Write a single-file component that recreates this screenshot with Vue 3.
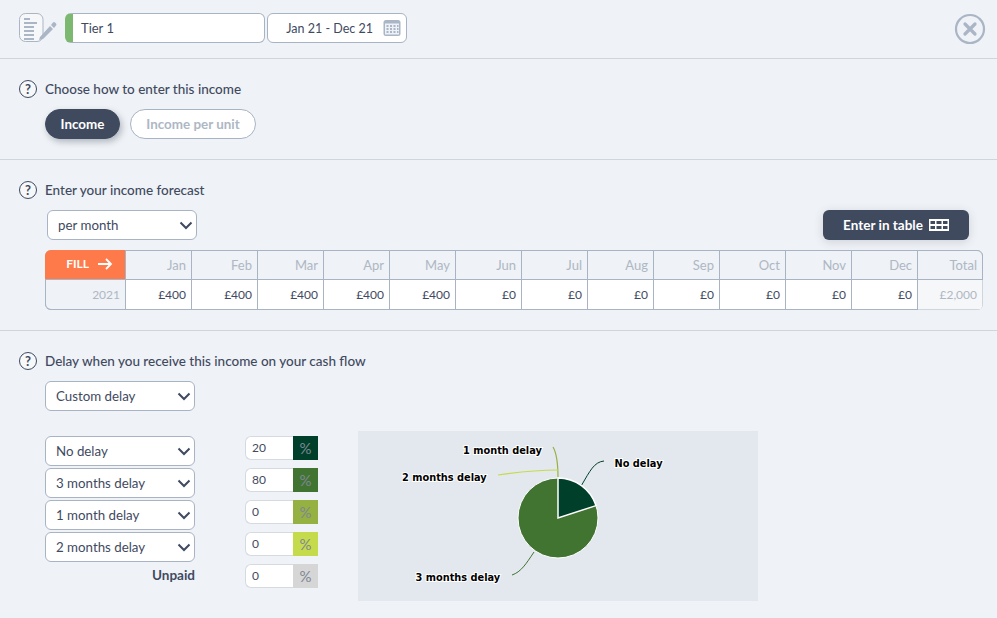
<script setup>
const months = ['Jan','Feb','Mar','Apr','May','Jun','Jul','Aug','Sep','Oct','Nov','Dec']
const values = ['£400','£400','£400','£400','£400','£0','£0','£0','£0','£0','£0','£0']
const delays = ['No delay','3 months delay','1 month delay','2 months delay']
const shares = [
  { v: '20', c: '#00402a' },
  { v: '80', c: '#417331' },
  { v: '0', c: '#95b141' },
  { v: '0', c: '#c6db4b' },
  { v: '0', c: '#d6d6d6' },
]
</script>

<template>
  <div class="page">
    <header class="top">
      <svg class="note" width="40" height="32" viewBox="0 0 40 32">
        <rect x="0.5" y="1.5" width="23.500" height="28" rx="6" fill="#f5f7f9" stroke="#aab5c5"/>
        <path d="M5 7h6M5 11h13M5 15h10M5 19h10M5 23h10M5 27h10" stroke="#aab5c5" stroke-width="1.800" fill="none"/>
        <path d="M21 25l10-11 3 3-10 10-4 1z M32 13l2-2.500a1.500 1.500 0 0 1 2 0l1 1a1.500 1.500 0 0 1 0 2l-2 2.500z" fill="#aab5c5"/>
      </svg>
      <div class="tier"><span>Tier 1</span></div>
      <div class="dates">
        <span>Jan 21 - Dec 21</span>
        <svg width="18" height="18" viewBox="0 0 18 18">
          <rect x="0.500" y="1" width="17" height="16" rx="2.500" fill="#aab5c5"/>
          <rect x="2" y="4.500" width="14" height="11" fill="#eef1f5"/>
          <path d="M3.500 6h2v2h-2zM7 6h2v2H7zM10.500 6h2v2h-2zM14 6h1.500v2H14zM3.500 9h2v2h-2zM7 9h2v2H7zM10.500 9h2v2h-2zM14 9h1.500v2H14zM3.500 12h2v2h-2zM7 12h2v2H7zM10.500 12h2v2h-2zM14 12h1.500v2H14z" fill="#aab5c5"/>
        </svg>
      </div>
      <svg class="close" width="32" height="32" viewBox="0 0 32 32">
        <circle cx="16" cy="16" r="14" fill="none" stroke="#aab5c5" stroke-width="2.200"/>
        <path d="M11 11l10 10M21 11L11 21" stroke="#aab5c5" stroke-width="3.200" stroke-linecap="round"/>
      </svg>
    </header>

    <section class="sec first">
      <h2><span class="q">?</span>Choose how to enter this income</h2>
      <div class="pills">
        <button class="pill on">Income</button>
        <button class="pill">Income per unit</button>
      </div>
    </section>

    <section class="sec second">
      <h2><span class="q">?</span>Enter your income forecast</h2>
      <div class="controls">
        <div class="sel wide">
          <select><option>per month</option></select>
          <svg class="chev" width="14" height="9" viewBox="0 0 14 9"><path d="M1.500 1.500L7 7l5.500-5.500" fill="none" stroke="#3f4a5f" stroke-width="2"/></svg>
        </div>
        <button class="tbl-btn">Enter in table
          <svg width="20" height="12" viewBox="0 0 20 12"><path fill-rule="evenodd" d="M0 0h20v12H0zM1.500 2v3H6V2zM7.500 2v3h5V2zM14 2v3h4.500V2zM1.500 7v3H6V7zM7.500 7v3h5V7zM14 7v3h4.500V7z" fill="#fff"/></svg>
        </button>
      </div>
      <div class="grid">
        <div class="fill">FILL
          <svg width="16" height="12" viewBox="0 0 16 12"><path d="M1 6h13M9 1l5 5-5 5" fill="none" stroke="#fff" stroke-width="1.800"/></svg>
        </div>
        <div v-for="m in months" :key="m" class="head">{{ m }}</div>
        <div class="head total-h">Total</div>
        <div class="year">2021</div>
        <div v-for="(v, i) in values" :key="i" class="val">{{ v }}</div>
        <div class="total">£2,000</div>
      </div>
    </section>

    <section class="sec third">
      <h2><span class="q">?</span>Delay when you receive this income on your cash flow</h2>
      <div class="sel custom">
        <select><option>Custom delay</option></select>
        <svg class="chev" width="14" height="9" viewBox="0 0 14 9"><path d="M1.500 1.500L7 7l5.500-5.500" fill="none" stroke="#3f4a5f" stroke-width="2"/></svg>
      </div>
      <div class="split">
        <div class="names">
          <div v-for="d in delays" :key="d" class="sel row">
            <select><option>{{ d }}</option></select>
            <svg class="chev" width="14" height="9" viewBox="0 0 14 9"><path d="M1.500 1.500L7 7l5.500-5.500" fill="none" stroke="#3f4a5f" stroke-width="2"/></svg>
          </div>
          <div class="unpaid">Unpaid</div>
        </div>
        <div class="shares">
          <div v-for="(s, i) in shares" :key="i" class="share">
            <input :value="s.v" />
            <span class="pct" :style="{ background: s.c }">%</span>
          </div>
        </div>
        <svg class="chart" width="400" height="170" viewBox="0 0 400 170">
          <rect width="400" height="170" fill="#e2e8ee"/>
          <path d="M223.700 54C232 40 236 31 246 30" fill="none" stroke="#00402a"/>
          <path d="M176 121C168 133 163 141 154 144" fill="none" stroke="#417331"/>
          <path d="M200 47C200 30 198 21 195 16" fill="none" stroke="#95b141" stroke-width="1.200"/>
          <path d="M200 39C175 39 160 41 140 44" fill="none" stroke="#c6db4b" stroke-width="1.200"/>
          <circle cx="200" cy="87" r="40" fill="#417331" stroke="#fff"/>
          <path d="M200 87V47A40 40 0 0 1 238 74.600Z" fill="#00402a" stroke="#fff" stroke-width="1.500"/>
          <text x="105" y="23">1 month delay</text>
          <text x="44" y="50">2 months delay</text>
          <text x="256.500" y="36">No delay</text>
          <text x="57.500" y="150">3 months delay</text>
        </svg>
      </div>
    </section>
  </div>
</template>

<style>
html, body { margin: 0; background: #eff2f6; }
</style>

<style scoped>
.page {
  width: 997px;
  height: 618px;
  overflow: hidden;
  background: #eff2f6;
  color: #3f4a5f;
  font-family: Lato, sans-serif;
  font-size: 13px;
}
.top {
  height: 58px;
  box-sizing: content-box;
  border-bottom: 1px solid #cfd5dc;
  display: flex;
  align-items: center;
  padding-left: 19px;
  padding-right: 11px;
}
.note { margin-right: 7px; margin-top: -2px; }
.tier {
  width: 200px;
  height: 30px;
  box-sizing: border-box;
  background: #fff;
  border: 1px solid #a8b3c4;
  border-left: 8px solid #7cb86f;
  border-radius: 6px;
  display: flex;
  align-items: center;
  padding-left: 8px;
  margin-top: -2px;
  margin-left: -1px;
}
.dates {
  width: 140px;
  height: 30px;
  box-sizing: border-box;
  background: #fff;
  border: 1px solid #a8b3c4;
  border-radius: 6px;
  margin-left: 2px;
  margin-top: -2px;
  display: flex;
  align-items: center;
  justify-content: flex-end;
  gap: 10px;
  padding-right: 5px;
  font-size: 12.500px;
}
.close { margin-left: auto; }
.sec { border-bottom: 1px solid #cfd5dc; box-sizing: content-box; padding-left: 19px; }
.first { height: 100px; padding-top: 0; }
.second { height: 170px; }
.third { height: 287px; border-bottom: none; }
h2 {
  margin: 0;
  font-size: 13.500px;
  font-weight: 500;
  display: flex;
  align-items: center;
  height: 20px;
  gap: 8px;
}
.first h2 { padding-top: 20px; }
.second h2 { padding-top: 20px; }
.third h2 { padding-top: 20px; }
.q {
  width: 18px;
  height: 18px;
  box-sizing: border-box;
  border: 1px solid #3f4a5f;
  border-radius: 50%;
  background: #f6f8fa;
  font-size: 13px;
  font-weight: 700;
  display: flex;
  align-items: center;
  justify-content: center;
}
.pills { display: flex; gap: 10px; margin: 10px 0 0 26px; }
.pill {
  height: 30px;
  box-sizing: border-box;
  border-radius: 15px;
  border: 1px solid #a8b3c4;
  background: #fff;
  color: #aeb7c4;
  font: 700 13.400px Lato, sans-serif;
  width: 126px;
  padding: 0;
}
.pill.on {
  width: 75px;
  background: #3f4a5f;
  border-color: #3f4a5f;
  color: #fff;
  box-shadow: 2px 3px 6px rgba(63, 74, 95, .35);
}
.sel { position: relative; }
.sel select {
  appearance: none;
  width: 100%;
  height: 100%;
  box-sizing: border-box;
  background: #fff;
  border: 1px solid #a8b3c4;
  border-radius: 6px;
  font: 13.300px Lato, sans-serif;
  color: #3f4a5f;
  padding: 0 10px;
  margin: 0;
}
.chev { position: absolute; right: 4px; top: 11px; }
.controls {
  display: flex;
  justify-content: space-between;
  align-items: center;
  margin: 10px 28px 0 28px;
  height: 30px;
}
.wide { width: 150px; height: 30px; }
.tbl-btn {
  width: 146px;
  height: 30px;
  border: none;
  border-radius: 6px;
  background: #3f4a5f;
  color: #fff;
  font: 700 13.500px Lato, sans-serif;
  display: flex;
  align-items: center;
  justify-content: center;
  gap: 6px;
  padding: 0;
  box-shadow: 0 2px 10px rgba(63, 74, 95, .18);
}
.grid {
  display: grid;
  grid-template-columns: 81px repeat(12, 66px) 65px;
  grid-template-rows: 30px 30px;
  width: 938px;
  margin: 10px 0 0 26px;
  box-sizing: border-box;
  border-radius: 6px;
  overflow: hidden;
  box-shadow: inset 0 0 0 1px #a8b3c4;
}
.fill {
  background: #ff7a4a;
  color: #fff;
  font-size: 12px;
  font-weight: 700;
  display: flex;
  align-items: center;
  justify-content: flex-end;
  gap: 8px;
  padding-right: 12px;
  padding-bottom: 2px;
  border-right: 1px solid #a8b3c4;
  border-bottom: 1px solid #a8b3c4;
  box-sizing: border-box;
}
.head, .val, .year, .total {
  box-sizing: border-box;
  display: flex;
  align-items: center;
  justify-content: flex-end;
  padding-right: 5px;
  border-right: 1px solid #a8b3c4;
}
.head { color: #aeb7c4; border-top: 1px solid #a8b3c4; border-bottom: 1px solid #a8b3c4; }
.total-h { border-right: 1px solid #a8b3c4; }
.year { color: #aeb7c4; border-left: 1px solid #a8b3c4; border-bottom: 1px solid #a8b3c4; font-size: 12px; }
.val { background: #fff; border-bottom: 1px solid #a8b3c4; font-size: 12px; }
.total { background: #f6f7f9; color: #aeb7c4; border-right: 1px solid #cfd5dc; border-bottom: 1px solid #cfd5dc; font-size: 12px; }
.custom { width: 150px; height: 30px; margin: 10px 0 0 26px; }
.split { display: flex; margin: 20px 0 0 26px; position: relative; }
.names { width: 150px; padding-top: 5px; display: flex; flex-direction: column; gap: 2px; }
.row { width: 150px; height: 30px; }
.unpaid { text-align: right; font-weight: 700; font-size: 13.500px; line-height: 22px; height: 24px; }
.shares { margin-left: 50px; padding-top: 5px; display: flex; flex-direction: column; gap: 8px; }
.share { display: flex; height: 24px; }
.share input {
  width: 48px;
  height: 24px;
  box-sizing: border-box;
  border: 1px solid #d5dae1;
  border-right: none;
  border-radius: 6px 0 0 6px;
  background: #fff;
  padding: 0 0 2px 6px;
  font: 12px Lato, sans-serif;
  color: #3f4a5f;
  outline: none;
}
.pct {
  width: 25px;
  display: flex;
  align-items: center;
  justify-content: center;
  color: #7e8794;
  font-size: 15px;
}
.chart { margin-left: 40px; display: block; }
.chart text {
  font: 700 9.800px "DejaVu Sans", sans-serif;
  fill: #000;
  stroke: #fff;
  stroke-width: 2px;
  paint-order: stroke;
}
</style>
